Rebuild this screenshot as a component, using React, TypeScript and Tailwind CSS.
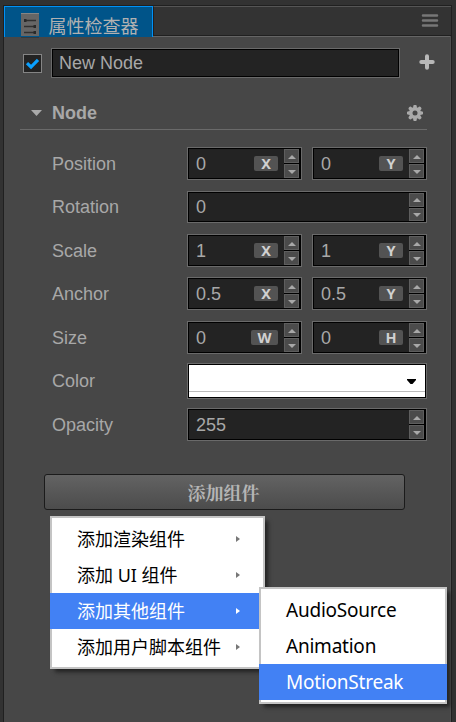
import React from "react";

const UI = "font-['Liberation_Sans','Noto_Sans_CJK_SC',sans-serif]";
const MENU = "font-['Noto_Sans','Noto_Sans_CJK_SC',sans-serif]";

function Steppers() {
  return (
    <div className="flex h-full w-[15px] flex-col gap-px bg-black">
      <div className="flex flex-1 items-center justify-center border border-[#5e5e5e] bg-[#4b4b4b]">
        <svg width="8" height="4" viewBox="0 0 8 4" className="mt-px"><path d="M4 0L8 4H0Z" fill="#a8a8a8" /></svg>
      </div>
      <div className="flex flex-1 items-center justify-center border border-[#5e5e5e] bg-[#4b4b4b]">
        <svg width="8" height="4" viewBox="0 0 8 4" className="mt-px"><path d="M0 0H8L4 4Z" fill="#a8a8a8" /></svg>
      </div>
    </div>
  );
}

function Field({ value, tag, wide = false }: { value: string; tag?: string; wide?: boolean }) {
  return (
    <div className={`${wide ? "w-[240px]" : "w-[115px]"} h-full shrink-0 border border-[#6a6a6a]`}>
      <div className="flex h-full items-center border border-r-2 border-black bg-[#232323] pl-[7px] text-[18px] leading-none text-[#a8a8a8]">
        <span className="flex-1">{value}</span>
        {tag && (
          <span
            className={`${tag === "W" ? "w-[27px]" : "w-[24px]"} mr-[6px] flex h-[15px] items-center justify-center rounded-[2px] bg-[#535353] font-['Noto_Sans',sans-serif] text-[14.5px] font-bold leading-none text-[#d0d0d0]`}
          >
            {tag}
          </span>
        )}
        <Steppers />
      </div>
    </div>
  );
}

function Row({ label, height, gap, children }: { label: string; height: string; gap: string; children: React.ReactNode }) {
  return (
    <div className={`flex items-center pl-[47px] ${height} ${gap}`}>
      <span className="w-[135px] text-[18px] leading-none text-[#a8a8a8]">{label}</span>
      <div className="flex h-full gap-[10px]">{children}</div>
    </div>
  );
}

function MenuItem({ text, active = false, arrow = false }: { text: string; active?: boolean; arrow?: boolean }) {
  return (
    <div
      className={`-mx-[2px] flex h-[36px] shrink-0 items-center justify-between pl-[27px] pr-[25px] ${active ? "bg-[#4281f4] text-white" : "text-black"}`}
    >
      <span className="whitespace-nowrap">{text}</span>
      {arrow && (
        <svg width="4" height="6" viewBox="0 0 4 6"><path d="M0 0L4 3L0 6Z" fill={active ? "#fff" : "#777"} /></svg>
      )}
    </div>
  );
}

export default function App() {
  return (
    <div className={`relative h-[722px] w-[456px] overflow-hidden bg-[#323232] pl-[3px] pt-[5px] ${UI}`}>
      <div className="h-[730px] w-[449px] border border-[#202020] bg-[#474747]">
        <header className="flex h-[30px] bg-[#333]">
          <div className="flex h-[31px] w-[149px] border-x-[1.5px] border-t-[1.5px] border-[#0091f6] bg-[#005489] pl-[14.5px]">
            <svg width="20" height="25" viewBox="0 0 20 25" className="mt-[6px] shrink-0">
              <rect x="1" width="18" height="24" fill="#666" />
              <path d="M1 .5H19" stroke="#858585" />
              <path d="M1 24H19" stroke="#242b30" />
              <path d="M4 7.5H16M4 13.5H16M4 19.5H16" stroke="#303030" strokeWidth="1.3" />
              <path d="M4 6h2.5v3H4zM13.5 12H16v3h-2.5zM13.5 18H16v3h-2.5z" fill="#292929" />
            </svg>
            <span className="ml-[9px] mt-[6px] whitespace-nowrap text-[18px] leading-[28px] text-[#b1b1b1]">属性检查器</span>
          </div>
          <div className="flex h-[30px] flex-1 justify-end border-b border-l border-t border-b-[#202020] border-l-[#202020] border-t-[#555] pr-[12px] pt-[6px]">
            <svg width="18" height="15" viewBox="0 0 18 15"><path d="M2 2.5H16M2 7.5H16M2 12.5H16" stroke="#777" strokeWidth="2.5" strokeLinecap="round" /></svg>
          </div>
        </header>
        <div className="h-full border-r border-r-[#505050] pr-0">
          <div className="flex">
            <div className="flex h-px w-[149px] justify-between bg-[#005489]">
              <div className="h-px w-px bg-[#0091f6]" />
              <div className="h-px w-px bg-[#0091f6]" />
            </div>
            <div className="h-px flex-1 bg-[#656565]" />
          </div>
          <div className="flex h-[54px] items-start pl-[19px] pt-[11px]">
            <div className="mt-[6px] flex h-[19px] w-[19px] items-center justify-center border border-[#858585] bg-[#232323]">
              <svg width="15" height="13" viewBox="0 0 15 13"><path d="M2 6.2L6 10L13 2.8" fill="none" stroke="#0aa0ff" strokeWidth="3.2" /></svg>
            </div>
            <div className="ml-[9px] h-[30px] w-[349px] border border-[#6a6a6a]">
              <div className="flex h-full items-center border border-black bg-[#232323] pl-[6px] text-[18px] leading-none text-[#a8a8a8]">New Node</div>
            </div>
            <svg width="16" height="16" viewBox="0 0 16 16" className="ml-[19px] mt-[6px]"><path d="M8 2.3V13.7M2.3 8H13.7" stroke="#b8b8b8" strokeWidth="4" strokeLinecap="round" /></svg>
          </div>
          <div className="ml-[16px] flex h-[39px] w-[407px] items-center border-b border-[#6a6a6a] pb-[1px] pl-[11px] pr-[4px] pt-[6px]">
            <svg width="11" height="6" viewBox="0 0 11 6"><path d="M0 0H11L5.5 6Z" fill="#aaa" /></svg>
            <span className="ml-[10px] flex-1 text-[18px] font-bold leading-none text-[#a8a8a8]">Node</span>
            <svg width="16" height="16" viewBox="0 0 16 16">
              <path d="M8 1.6V14.4M1.6 8H14.4M3.4 3.4L12.6 12.6M12.6 3.4L3.4 12.6" stroke="#aaa" strokeWidth="3.6" strokeLinecap="round" />
              <circle cx="8" cy="8" r="6" fill="#aaa" />
              <circle cx="8" cy="8" r="2.5" fill="#474747" />
            </svg>
          </div>
          <div className="pl-px">
            <Row label="Position" height="h-[33px]" gap="mt-[17px]"><Field value="0" tag="X" /><Field value="0" tag="Y" /></Row>
            <Row label="Rotation" height="h-[32px]" gap="mt-[11px]"><Field value="0" wide /></Row>
            <Row label="Scale" height="h-[33px]" gap="mt-[11px]"><Field value="1" tag="X" /><Field value="1" tag="Y" /></Row>
            <Row label="Anchor" height="h-[33px]" gap="mt-[10px]"><Field value="0.5" tag="X" /><Field value="0.5" tag="Y" /></Row>
            <Row label="Size" height="h-[33px]" gap="mt-[11px]"><Field value="0" tag="W" /><Field value="0" tag="H" /></Row>
            <Row label="Color" height="h-[36px]" gap="mt-[9px]">
              <div className="w-[240px] border border-[#6a6a6a]">
                <div className="flex h-full flex-col border border-black bg-white">
                  <div className="flex flex-1 items-end justify-end border-b border-[#bbb] pb-[7px] pr-[9px]">
                    <svg width="9" height="5" viewBox="0 0 9 5"><path d="M0 0H9V1L5.5 5H3.5L0 1Z" fill="#000" /></svg>
                  </div>
                  <div className="h-[5px]" />
                </div>
              </div>
            </Row>
            <Row label="Opacity" height="h-[33px]" gap="mt-[9px]"><Field value="255" wide /></Row>
          </div>
          <div className="ml-[40px] mt-[33px] flex h-[36px] w-[361px] items-center justify-center rounded-[3px] border border-[#1b1b1b] bg-linear-to-b from-[#636363] to-[#4c4c4c] pr-[2px] font-['Noto_Serif_CJK_SC','Noto_Sans_CJK_SC',sans-serif] text-[18px] font-bold leading-none text-[#b5b5b5]">添加组件</div>
        </div>
      </div>

      <div className={`absolute left-[50px] top-[516px] flex h-[153px] w-[215px] flex-col border-2 border-[#c4c4c4] bg-white pt-[3px] text-[18px] leading-none shadow-[4px_4px_4px_-1px_#222] ${MENU}`}>
        <MenuItem text="添加渲染组件" arrow />
        <MenuItem text="添加 UI 组件" arrow />
        <MenuItem text="添加其他组件" arrow active />
        <MenuItem text="添加用户脚本组件" arrow />
      </div>
      <div className={`absolute left-[259px] top-[587px] flex h-[117px] w-[188px] flex-col border-2 border-[#c4c4c4] bg-white pt-[3px] text-[19px] leading-none tracking-[-0.23px] shadow-[4px_4px_4px_-1px_#222] ${MENU}`}>
        <MenuItem text="AudioSource" />
        <MenuItem text="Animation" />
        <MenuItem text="MotionStreak" active />
      </div>
    </div>
  );
}
